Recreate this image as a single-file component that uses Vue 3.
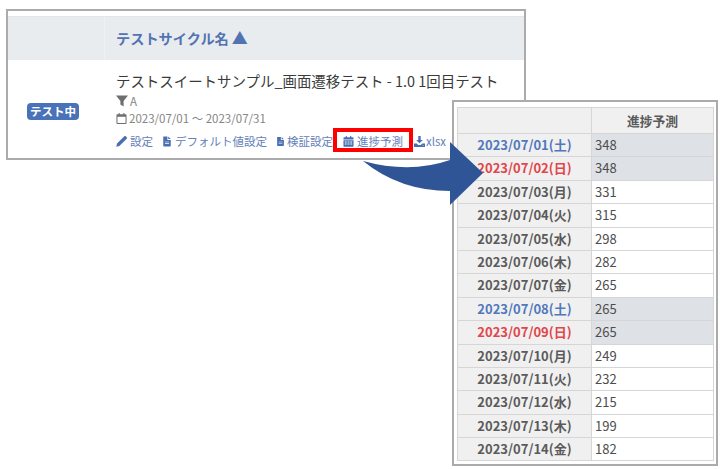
<script setup>
const rows = [
  ['2023/07/01(土)', 348, 'sat'],
  ['2023/07/02(日)', 348, 'sun'],
  ['2023/07/03(月)', 331, ''],
  ['2023/07/04(火)', 315, ''],
  ['2023/07/05(水)', 298, ''],
  ['2023/07/06(木)', 282, ''],
  ['2023/07/07(金)', 265, ''],
  ['2023/07/08(土)', 265, 'sat'],
  ['2023/07/09(日)', 265, 'sun'],
  ['2023/07/10(月)', 249, ''],
  ['2023/07/11(火)', 232, ''],
  ['2023/07/12(水)', 215, ''],
  ['2023/07/13(木)', 199, ''],
  ['2023/07/14(金)', 182, ''],
]
</script>

<template>
  <div class="canvas">
    <section class="card">
      <header class="head">
        <div class="head-l"></div>
        <div class="head-r">テストサイクル名<span class="sort">▲</span></div>
      </header>
      <div class="body">
        <div class="status"><span class="badge">テスト中</span></div>
        <div class="info">
          <div class="title">テストスイートサンプル_画面遷移テスト - 1.0 1回目テスト</div>
          <div class="meta meta-a">
            <svg class="ic ic-filter" viewBox="0 0 12 12"><path d="M0 .5h12L7.6 6v5.500L4.400 9.400V6z" /></svg>
            <span>A</span>
          </div>
          <div class="meta meta-d">
            <svg class="ic" viewBox="0 0 12 12"><path d="M2.800 0h1.200v1.400h4V0h1.200v1.400h1.300q1 0 1 1v8.600q0 1-1 1H1.500q-1 0-1-1V2.400q0-1 1-1h1.300zM1.600 4.200v6.300q0 .4.400.4h8q.4 0 .4-.4V4.200z" /></svg>
            <span>2023/07/01 ～ 2023/07/31</span>
          </div>
          <div class="links">
            <a class="link l1">
              <svg class="ic" viewBox="0 0 12 12"><path d="M8.300 1.100l2.600 2.600-7.200 7.200-3.400.8.800-3.400zM9 .4q.9-.8 1.700 0l.9.900q.8.800 0 1.700l-.7.700-2.600-2.600z" /></svg>
              設定
            </a>
            <a class="link l2">
              <svg class="ic" viewBox="0 0 12 12"><path d="M1.500 0h5v3.500q0 .6.600.6h3.400v7q0 .9-.9.900H2.400q-.9 0-.9-.9zM7.500 0l3 3h-3zM3.500 6.200v.8h5v-.8zM3.500 8.200v.8h5v-.8z" fill-rule="evenodd" /></svg>
              デフォルト値設定
            </a>
            <a class="link l3">
              <svg class="ic" viewBox="0 0 12 12"><path d="M1.500 0h5v3.500q0 .6.600.6h3.400v7q0 .9-.9.900H2.400q-.9 0-.9-.9zM7.500 0l3 3h-3zM3.500 6.200v.8h5v-.8zM3.500 8.200v.8h5v-.8z" fill-rule="evenodd" /></svg>
              検証設定
            </a>
            <a class="link l4">
              <svg class="ic" viewBox="0 0 12 12"><path d="M3 0h1.200v1.300h3.600V0H9v1.300h1.500q1 0 1 1v1.400H.5V2.300q0-1 1-1H3zM.5 4.500h11v6.300q0 1-1 1h-9q-1 0-1-1zM2 6v1h2V6zm3 0v1h2V6zm3 0v1h2V6zM2 8.300v1h2v-1zm3 0v1h2v-1zm3 0v1h2v-1z" fill-rule="evenodd" /></svg>
              進捗予測
            </a>
            <a class="link l5">
              <svg class="ic" viewBox="0 0 12 12"><path d="M4.700 0h2.600v4.400h2.300L6 8 2.400 4.400h2.300zM0 8.200h3l1.500 1.500h3L9 8.200h3V12H0zM9.500 10v.8h.8V10z" fill-rule="evenodd" /></svg>
              xlsx
            </a>
          </div>
        </div>
      </div>
    </section>

    <section class="panel">
      <div class="sheet">
        <div class="cell th"></div>
        <div class="cell th th-t">進捗予測</div>
        <template v-for="r in rows" :key="r[0]">
          <div class="cell date" :class="r[2]">{{ r[0] }}</div>
          <div class="cell num" :class="{ off: r[2] }">{{ r[1] }}</div>
        </template>
      </div>
    </section>

    <svg class="arrow" viewBox="0 0 723 469"><path d="M363 161Q410 174 450 160V142L483 173L450 205V191Q400 191 363 161Z" /></svg>
    <div class="redbox"></div>
  </div>
</template>

<style scoped>
.canvas {
  position: relative;
  width: 723px;
  height: 469px;
  overflow: hidden;
  background: #fff;
  font-family: "Noto Sans CJK JP", "Noto Sans", sans-serif;
}
.card {
  position: absolute;
  left: 6px;
  top: 9px;
  width: 520px;
  height: 151px;
  box-sizing: border-box;
  border: 2px solid #ababab;
  padding-top: 5px;
  background: #fff;
}
.head {
  display: flex;
  height: 44px;
  background: #e9ecef;
  border-top: 1px solid #e3e6e9;
  box-sizing: border-box;
}
.head-l {
  width: 96px;
  border-right: 1px solid #eef0f2;
}
.head-r {
  padding-left: 11px;
  font-size: 14.200px;
  line-height: 41px;
  font-weight: 700;
  color: #5273b2;
}
.sort {
  margin-left: 3px;
  font-size: 16px;
}
.body {
  display: flex;
}
.status {
  width: 97px;
  padding: 43px 0 0 19px;
  box-sizing: border-box;
}
.badge {
  display: block;
  width: 52px;
  height: 17px;
  border-radius: 4px;
  background: #4a72b8;
  color: #fff;
  font-size: 11.500px;
  font-weight: 700;
  line-height: 17px;
  text-align: center;
}
.info {
  padding: 11px 0 0 11px;
  white-space: nowrap;
}
.title {
  font-size: 14.440px;
  line-height: 20px;
  color: #3a3a3a;
}
.meta {
  display: flex;
  align-items: center;
  height: 16px;
  font-size: 11.500px;
  color: #858585;
}
.meta-a {
  margin-top: 2px;
}
.meta-d {
  margin-top: 1px;
}
.ic {
  width: 11px;
  height: 11px;
  fill: currentColor;
  flex: none;
}
.ic-filter {
  width: 12px;
  height: 12px;
  margin-right: 2px;
  fill: #6e6e6e;
}
.meta-d .ic {
  margin-right: 2px;
  fill: #6e6e6e;
}
.links {
  display: flex;
  margin-top: 7px;
  font-size: 11.500px;
  line-height: 16px;
  color: #6480b8;
}
.link {
  display: flex;
  align-items: center;
  gap: 3px;
}
.link .ic {
  color: #4a6eb2;
}
.l1 {
  margin-right: 9px;
}
.l2 {
  margin-right: 9px;
}
.l3 {
  margin-right: 10px;
  gap: 2px;
}
.l2 .ic {
  width: 10px;
}
.l3 .ic {
  width: 9px;
}
.l4 {
  margin-right: 11px;
}
.l5 {
  gap: 1px;
}
.panel {
  position: absolute;
  left: 452px;
  top: 100px;
  width: 266px;
  height: 366px;
  box-sizing: border-box;
  border: 2px solid #ababab;
  padding: 5px 3px 0 3px;
  background: #fff;
  overflow: hidden;
}
.sheet {
  display: grid;
  grid-template-columns: 134px 122px;
  grid-template-rows: 26px;
  grid-auto-rows: 23.400px;
  width: 256px;
  border-top: 1px solid #d6d6d6;
  border-left: 1px solid #d6d6d6;
}
.cell {
  box-sizing: border-box;
  border-right: 1px solid #d6d6d6;
  border-bottom: 1px solid #d6d6d6;
  font-size: 13px;
  line-height: 22px;
  color: #4d4d4d;
}
.th {
  background: #f0f0f0;
  line-height: 25px;
}
.th-t {
  text-align: center;
  font-weight: 700;
  font-size: 12.800px;
  color: #595959;
}
.date {
  background: #f0f0f0;
  text-align: center;
  font-weight: 700;
  color: #5a5a5a;
}
.date.sat {
  color: #5278bc;
}
.date.sun {
  color: #e0464b;
}
.num {
  padding-left: 3px;
}
.num.off {
  background: #dee1e5;
}
.arrow {
  position: absolute;
  left: 0;
  top: 0;
  width: 723px;
  height: 469px;
  fill: #2f5597;
}
.redbox {
  position: absolute;
  left: 333px;
  top: 128px;
  width: 80px;
  height: 24px;
  box-sizing: border-box;
  border: 4px solid #f00;
}
</style>
